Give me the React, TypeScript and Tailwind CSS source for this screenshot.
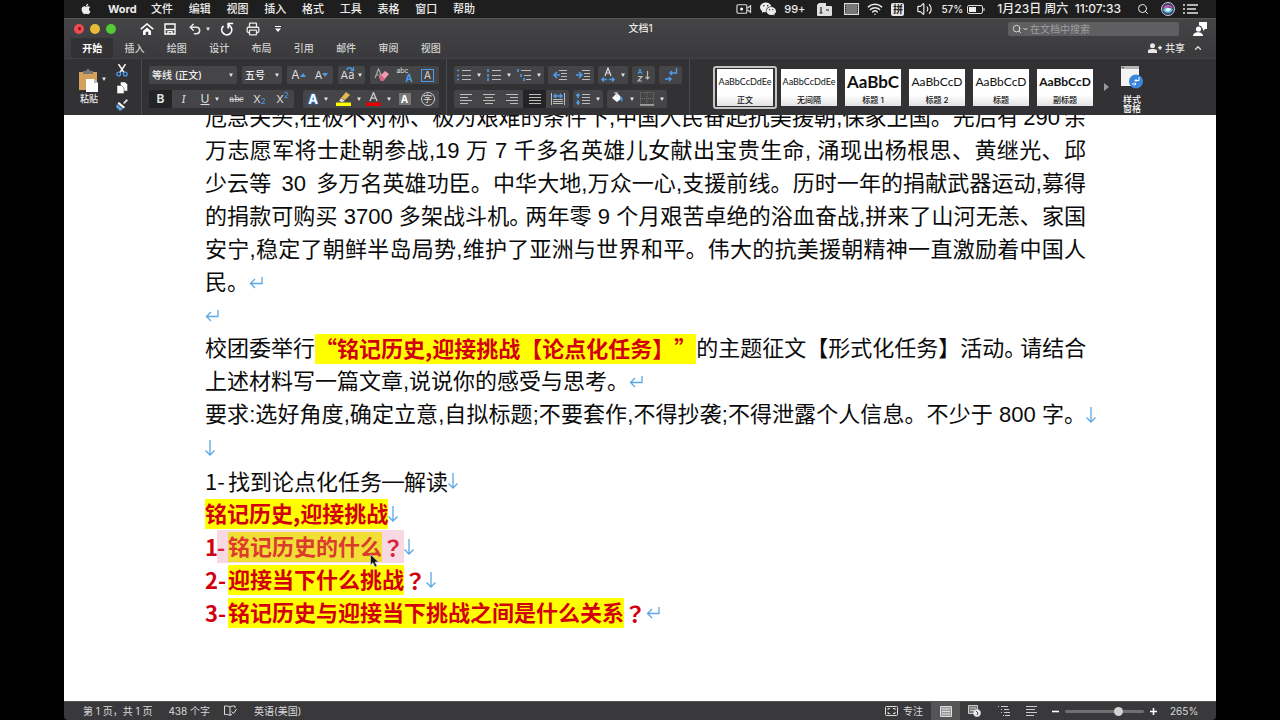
import type { ReactNode } from "react";
import { FaApple } from "react-icons/fa";
import { IoLogoWechat } from "react-icons/io5";
import { Search, Wifi, Volume2, Printer, Undo2, ChevronUp } from "lucide-react";

const menus = ["文件", "编辑", "视图", "插入", "格式", "工具", "表格", "窗口", "帮助"];
const tabs = ["开始", "插入", "绘图", "设计", "布局", "引用", "邮件", "审阅", "视图"];

function MenuBar() {
  return (
    <header className="flex h-[18px] shrink-0 items-center bg-[#1f1e1f] pl-4 pr-[18px] text-[11px] font-medium text-[#ececec]">
      <FaApple className="size-3" />
      <span className="ml-4 w-7 text-[11px] font-bold">Word</span>
      <nav className="ml-[15px] flex w-[324px] justify-between">
        {menus.map((m) => (
          <button key={m} type="button" className="leading-4">{m}</button>
        ))}
      </nav>
      <div className="ml-auto flex items-center gap-2 whitespace-nowrap">
        <svg viewBox="0 0 17 12" className="h-3 w-4" fill="none" stroke="#dcdcdc" strokeWidth="1.2">
          <rect x="1" y="1.5" width="10.5" height="9" rx="1" />
          <circle cx="6" cy="6" r="1.6" fill="#fff" stroke="none" />
          <path d="M12 5.2 15.5 2.5v7L12 6.8" />
        </svg>
        <IoLogoWechat className="size-4" />
        <span className="mr-1 text-[11px]">99+</span>
        <svg viewBox="0 0 15 13" className="mr-1 h-[13px] w-[15px]" fill="#e0e0e0">
          <path d="M2 0h7v3h5a1 1 0 0 1 1 1v8a1 1 0 0 1-1 1H1a1 1 0 0 1-1-1V2Z" />
          <path d="M4 4v6M2.500 10h3M9 7h3" stroke="#222" strokeWidth="1.2" />
        </svg>
        <svg viewBox="0 0 15 12" className="h-3 w-[15px]" fill="#777" stroke="#ddd">
          <rect x="0.5" y="0.5" width="14" height="11" />
          <path d="M1.500 2v8M13.500 2v8" stroke="#222" strokeDasharray="1 1" />
        </svg>
        <Wifi className="size-4" strokeWidth={2.2} />
        <span className="mr-1 flex h-[13px] w-[13px] items-center justify-center rounded-[2px] bg-[#e6e6e6] text-[10px] font-bold leading-3 text-[#222]">拼</span>
        <Volume2 className="h-4 w-[17px]" strokeWidth={1.8} />
        <span className="-mr-1 text-[10px]">57%</span>
        <svg viewBox="0 0 18 9" className="mr-1 h-[9px] w-[18px]" fill="none" stroke="#ddd">
          <rect x="0.5" y="0.5" width="15" height="8" rx="1.5" />
          <rect x="2" y="2" width="7" height="5" fill="#eee" stroke="none" />
          <path d="M17 3v3" />
        </svg>
        <span className="mr-2 text-[12px]">1月23日 周六&nbsp; 11:07:33</span>
        <Search className="mr-1 size-3" strokeWidth={2} />
        <svg viewBox="0 0 14 14" className="size-[14px]">
          <circle cx="7" cy="7" r="6.5" fill="#3c3d70" stroke="#c9c9d6" />
          <path d="M2 7c1-5 8-5 10-1-3-1-6-1-10 1Z" fill="#d7529d" />
          <path d="M2 8c3-4 7-2 10-1-1 5-8 5-10 1Z" fill="#4cc3de" />
          <path d="M4 8c2-3 4-2 6-1-1 3-4 3-6 1Z" fill="#f4f8ff" />
        </svg>
        <svg viewBox="0 0 15 10" className="h-[10px] w-[15px]" stroke="#e6e6e6" strokeWidth="1.5">
          <path d="M0 1h2M4 1h11M0 5h2M4 5h9M0 9h2M4 9h11" />
        </svg>
      </div>
    </header>
  );
}

function TitleBar() {
  return (
    <div className="grid h-5 shrink-0 grid-cols-[1fr_auto_1fr] items-center border-t border-[#5e5557] pl-[10px] pr-[9px] text-[#eaeaea]">
      <div className="flex items-center">
        <div className="flex gap-[6px]">
          <button type="button" aria-label="关闭" className="flex size-[10px] items-center justify-center rounded-full bg-[#ee4b50]"><span className="size-[3px] rounded-full bg-[#7c0d12]" /></button>
          <button type="button" aria-label="最小化" className="size-[10px] rounded-full bg-[#e5bd36]" />
          <button type="button" aria-label="缩放" className="size-[10px] rounded-full bg-[#54cb35]" />
        </div>
        <div className="ml-6 flex items-center">
          <button type="button" aria-label="主页">
            <svg viewBox="0 0 14 12" className="h-3 w-[14px]" fill="none" stroke="#fff" strokeWidth="1.6">
              <path d="M0.8 6.2 7 1l6.2 5.2" />
              <path d="M7 4.5 11 8v4H8.3V8.8H5.7V12H3V8Z" fill="#fff" stroke="none" />
            </svg>
          </button>
          <button type="button" aria-label="保存" className="ml-[10px]">
            <svg viewBox="0 0 12 12" className="size-3" fill="none" stroke="#fff" strokeWidth="1.4">
              <path d="M1 1h10v10H1Z" />
              <path d="M1 6.5h10" />
              <path d="M4 11V8.6h4V11" />
            </svg>
          </button>
          <button type="button" aria-label="撤销" className="ml-3 flex items-center gap-1"><Undo2 className="size-[14px]" strokeWidth={2.6} /><Caret /></button>
          <button type="button" aria-label="重做" className="ml-[10px]">
            <svg viewBox="0 0 14 14" className="size-[14px]" fill="none" stroke="#fff" strokeWidth="1.7">
              <path d="M3.500 4A5 5 0 1 0 11 5.200L8.300 2" />
              <path d="M13.200 1.500H8.200V6.500" />
            </svg>
          </button>
          <button type="button" aria-label="打印" className="ml-3"><Printer className="size-[14px]" strokeWidth={2.2} /></button>
          <button type="button" aria-label="自定义" className="ml-[15px]">
            <svg viewBox="0 0 6 6" className="size-[6px]" fill="#fff"><path d="M0 0h6v1H0ZM0 2.5h6L3 6Z" /></svg>
          </button>
        </div>
      </div>
      <h1 className="text-[10px] font-medium">文档1</h1>
      <div className="flex items-center justify-end">
        <label className="mr-[14px] flex h-[14px] w-[171px] items-center rounded-[2px] bg-[#5f5e60] pl-1">
          <Search className="size-[10px] shrink-0" />
          <svg viewBox="0 0 5 4" className="ml-px h-1 w-[5px] shrink-0" fill="none" stroke="#ddd"><path d="m.5 1 2 2 2-2" /></svg>
          <input aria-label="在文档中搜索" placeholder="在文档中搜索" className="ml-[2px] w-full min-w-0 bg-transparent text-[10px] leading-3 outline-none placeholder:text-[#a0a0a0]" />
        </label>
        <svg viewBox="0 0 14 14" className="size-[14px]" fill="#fff">
          <path d="M6 0h8v7h-2l-2 2V6.500H9A3 3 0 0 0 6 3.500Z" />
          <circle cx="5.500" cy="7" r="2.600" />
          <path d="M0 14c0-5 10-5 10 0Z" />
        </svg>
      </div>
    </div>
  );
}

function TabBar() {
  return (
    <div className="flex h-5 shrink-0 items-center justify-between pl-[7px] pr-[13px]">
      <nav className="flex h-full w-[381px]">
        {tabs.map((t, i) => (
          <button
            key={t}
            type="button"
            className={i === 0 ? "flex-1 bg-[#323133] text-[10px] font-bold text-white" : "flex-1 text-[10px] font-medium text-[#d2d2d2]"}
          >
            {t}
          </button>
        ))}
      </nav>
      <div className="flex items-center text-[10px] font-medium text-[#e0e0e0]">
        <button type="button" className="mr-2 flex items-center gap-[3px]">
          <svg viewBox="0 0 14 10" className="h-[10px] w-[14px]" fill="#e8e8e8">
            <circle cx="4.500" cy="2.800" r="2.500" />
            <path d="M0 10V7.500C0 5.500 9 5.500 9 7.500V10ZM10 4h4v1.500h-4ZM11.300 2.700h1.500v4h-1.500Z" />
          </svg>
          共享
        </button>
        <button type="button" aria-label="折叠功能区"><ChevronUp className="size-[10px]" strokeWidth={3} /></button>
      </div>
    </div>
  );
}

function Caret() {
  return <svg viewBox="0 0 4 4" className="size-1 shrink-0" fill="#e6e6e6"><path d="M0 .5h4L2 4Z" /></svg>;
}

function Group({ children }: { children: ReactNode }) {
  return <div className="flex h-[18px] rounded-[2px] bg-[#454446]">{children}</div>;
}

function Tool({ label, wide, active, children }: { label: string; wide?: boolean; active?: boolean; children: ReactNode }) {
  return (
    <button
      type="button"
      aria-label={label}
      className={
        (wide ? "w-[30px] gap-[6px] " : "w-[23px] ") +
        (active ? "bg-[#242325] " : "") +
        "flex h-full items-center justify-center text-[12px] leading-4 text-[#dedede]"
      }
    >
      {children}
      {wide && <Caret />}
    </button>
  );
}

function Lines({ d, blue }: { d: string; blue?: string }) {
  return (
    <svg viewBox="0 0 14 12" className="h-3 w-[14px] shrink-0" fill="none" stroke="#bdbdbd" strokeWidth="1">
      <path d={d} />
      {blue && <path d={blue} stroke="#4c9be8" strokeWidth="1.6" />}
    </svg>
  );
}

function Divider() {
  return <div className="mx-[7px] w-px self-stretch bg-[#4a494b]" />;
}

function FontTools() {
  return (
    <div className="flex w-[290px] flex-col gap-[6px]">
      <div className="flex justify-between">
        <label className="flex h-[18px] w-[88px] items-center rounded-[2px] bg-[#454446] pr-1">
          <select aria-label="字体" className="w-full appearance-none bg-transparent pl-[3px] text-[10px] font-medium text-[#f0f0f0]"><option>等线 (正文)</option></select>
          <Caret />
        </label>
        <label className="flex h-[18px] w-10 items-center rounded-[2px] bg-[#454446] pr-[3px]">
          <select aria-label="字号" className="w-full appearance-none bg-transparent pl-[3px] text-[10px] font-medium text-[#f0f0f0]"><option>五号</option></select>
          <Caret />
        </label>
        <Group>
          <Tool label="增大字号">A<svg viewBox="0 0 6 4" className="h-1 w-[6px]" fill="#4c9be8"><path d="M0 4h6L3 0Z" /></svg></Tool>
          <Tool label="减小字号"><span className="text-[11px]">A</span><svg viewBox="0 0 6 4" className="h-1 w-[6px]" fill="#4c9be8"><path d="M0 0h6L3 4Z" /></svg></Tool>
        </Group>
        <Group>
          <button type="button" aria-label="更改大小写" className="relative flex w-[27px] items-center justify-center gap-1 text-[11px] text-[#dedede]">
            Aa<Caret />
            <svg viewBox="0 0 8 5" className="absolute left-2 top-px h-[5px] w-2" fill="none" stroke="#4c9be8" strokeWidth="1.3"><path d="M.5 3c1-3 5-3 6 0M7.500 0v3.500H4.500" /></svg>
          </button>
        </Group>
        <Group>
          <Tool label="清除格式">
            <svg viewBox="0 0 16 14" className="h-[14px] w-4">
              <path d="M1 10 4.500 1 8 9M2.500 7h4" fill="none" stroke="#aaa" strokeWidth="1.2" />
              <path d="m5 9 6-6 4 3-6 7H7Z" fill="#ee9cb0" />
              <path d="m5 9 2-2 4 4-2 2H7Z" fill="#d9667f" />
            </svg>
          </Tool>
          <Tool label="拼音指南">
            <span className="flex flex-col items-end leading-none">
              <span className="mr-1 h-[6px] text-[7px] leading-[6px]">abc</span>
              <span className="h-[9px] text-[10px] font-bold leading-[9px] text-[#4c9be8]">A</span>
            </span>
          </Tool>
          <Tool label="字符边框"><span className="flex size-[13px] items-center justify-center border border-[#4c9be8] text-[10px]">A</span></Tool>
        </Group>
      </div>
      <div className="flex justify-between">
        <Group>
          <Tool label="粗体" active><b>B</b></Tool>
          <Tool label="斜体"><i className="font-serif">I</i></Tool>
          <Tool label="下划线" wide><u>U</u></Tool>
          <Tool label="删除线"><s className="font-serif text-[10px]">abc</s></Tool>
          <Tool label="下标"><span className="text-[11px]">X</span><sub className="text-[8px] leading-none text-[#4c9be8]">2</sub></Tool>
          <Tool label="上标"><span className="text-[11px]">X</span><sup className="text-[8px] leading-none text-[#4c9be8]">2</sup></Tool>
        </Group>
        <Group>
          <Tool label="文本效果" wide><b className="text-[13px] text-white [text-shadow:0_0_2px_#2f8cf0,0_0_3px_#2f8cf0]">A</b></Tool>
          <Tool label="突出显示" wide>
            <svg viewBox="0 0 15 14" className="h-[14px] w-[15px] shrink-0">
              <path d="M5 6 10 0l4 3-5 5Z" fill="#e3b84c" />
              <path d="m5 6 4 3-3 1-3-1Z" fill="#ddd" />
              <path d="M0 10.500h15V14H0Z" fill="#ffff00" />
            </svg>
          </Tool>
          <Tool label="字体颜色" wide>
            <svg viewBox="0 0 15 14" className="h-[14px] w-[15px] shrink-0">
              <path d="m4 9 3.500-8.500L11 9M5.200 6.200h4.600" fill="none" stroke="#ccc" strokeWidth="1.300" />
              <path d="M0 10.500h15V14H0Z" fill="#e60000" />
            </svg>
          </Tool>
          <Tool label="字符底纹"><span className="flex size-3 items-center justify-center bg-[#777] text-[10px] font-bold text-white">A</span></Tool>
          <Tool label="带圈字符"><span className="flex size-[14px] items-center justify-center rounded-full border border-[#ccc] text-[9px]">字</span></Tool>
        </Group>
      </div>
    </div>
  );
}

function ParagraphTools() {
  return (
    <div className="flex flex-col gap-[6px]">
      <div className="flex gap-1">
        <Group>
          <Tool label="项目符号" wide><Lines d="M5 1.500h9M5 6.500h9M5 10.500h9" blue="M0 1.500h2M0 6.500h2M0 10.500h2" /></Tool>
          <Tool label="编号" wide><Lines d="M5 1.500h9M5 6.500h9M5 10.500h9" blue="M1 0v3M1 5v3M1 9v3" /></Tool>
          <Tool label="多级列表" wide><Lines d="M4 1.500h10M7 6.500h7M9 10.500h5" blue="M1 0v3M4 5v3M7 9v3" /></Tool>
        </Group>
        <Group>
          <Tool label="减少缩进"><Lines d="M6 1.500h8M8 4.500h6M8 7.500h6M6 10.500h8" blue="M7 6H1M4 3 1 6l3 3" /></Tool>
          <Tool label="增加缩进"><Lines d="M6 1.500h8M8 4.500h6M8 7.500h6M6 10.500h8" blue="M0 6h6M3 3l3 3-3 3" /></Tool>
        </Group>
        <Group>
          <Tool label="中文版式" wide>
            <svg viewBox="0 0 14 16" className="h-4 w-[14px] shrink-0" fill="none">
              <path d="m4 9 3-8 3 8M5 6h4" stroke="#ddd" strokeWidth="1.200" />
              <path d="M1 12.500h5M3 10.500l-2 2 2 2M8 12.500h5M11 10.500l2 2-2 2" stroke="#4c9be8" strokeWidth="1.600" />
            </svg>
          </Tool>
        </Group>
        <Group>
          <Tool label="排序">
            <svg viewBox="0 0 14 14" className="size-[14px]" fill="none">
              <path d="m1 6 2-5 2 5M2 4.500h2" stroke="#4c9be8" />
              <path d="M1 8.500h4L1 13h4M10.500 3v8M8.500 9l2 2 2-2" stroke="#bbb" strokeWidth="1.200" />
            </svg>
          </Tool>
        </Group>
        <Group>
          <Tool label="显示编辑标记">
            <svg viewBox="0 0 14 14" className="size-[14px]" fill="none" stroke="#4c9be8" strokeWidth="1.500">
              <path d="M12.500 0v5H6M8 3 6 5l2 2M1 11h6M5 9l2 2-2 2" />
            </svg>
          </Tool>
        </Group>
      </div>
      <div className="flex gap-1">
        <Group>
          <Tool label="左对齐"><Lines d="M1 1.500h12M1 4.500h8M1 7.500h12M1 10.500h8" /></Tool>
          <Tool label="居中"><Lines d="M1 1.500h12M3 4.500h8M1 7.500h12M3 10.500h8" /></Tool>
          <Tool label="右对齐"><Lines d="M1 1.500h12M5 4.500h8M1 7.500h12M5 10.500h8" /></Tool>
          <Tool label="两端对齐" active><Lines d="M1 1.500h12M1 4.500h12M1 7.500h12M1 10.500h12" /></Tool>
          <Tool label="分散对齐"><Lines d="M.5 0v12M13.500 0v12M2 6.500h10M2 8.500h10M2 10.500h10" blue="M3 3h8M5 1 3 3l2 2M9 1l2 2-2 2" /></Tool>
        </Group>
        <Group>
          <Tool label="行距" wide><Lines d="M6 1.500h8M6 4.500h8M6 7.500h8M6 10.500h8" blue="M2 1v4M0.500 3 2 1l1.500 2M2 7v4M.5 9 2 11l1.500-2" /></Tool>
        </Group>
        <Group>
          <Tool label="底纹" wide>
            <svg viewBox="0 0 14 14" className="size-[14px] shrink-0">
              <path d="m2 6 5-5 5 5-5 4Z" fill="#fff" />
              <path d="M5 2V0h2v5" fill="none" stroke="#ccc" />
              <path d="M10 4c3 1 3 4 2 6l-2-3Z" fill="#4c9be8" />
            </svg>
          </Tool>
          <Tool label="边框" wide>
            <svg viewBox="0 0 14 14" className="size-[14px] shrink-0" fill="none" stroke="#777" strokeDasharray="1 1">
              <path d="M.5.5h13v12H.5ZM7 0v13M0 6.500h14" />
              <path d="M0 13h14" stroke="#ddd" strokeDasharray="none" />
            </svg>
          </Tool>
        </Group>
      </div>
    </div>
  );
}

const styles = [
  { name: "正文", sample: "AaBbCcDdEe", cls: "text-[9px]" },
  { name: "无间隔", sample: "AaBbCcDdEe", cls: "text-[9px]" },
  { name: "标题 1", sample: "AaBbC", cls: "text-[17px] font-bold" },
  { name: "标题 2", sample: "AaBbCcD", cls: "text-[12px]" },
  { name: "标题", sample: "AaBbCcD", cls: "text-[12px]" },
  { name: "副标题", sample: "AaBbCcD", cls: "text-[12px] font-bold" },
];

function StyleGallery() {
  return (
    <div className="flex items-center pl-4">
      {styles.map((s, i) => (
        <button
          key={s.name}
          type="button"
          className={(i === 0 ? "border-[#c4c4c4] " : "border-transparent ") + "flex h-[43px] w-16 items-center justify-center rounded-[3px] border-2"}
        >
          <span className="flex h-[37px] w-14 flex-col items-center overflow-hidden bg-gradient-to-b from-white from-70% to-[#e2e2e4] text-[#111]">
            <span className={s.cls + " h-[25px] whitespace-nowrap font-['Lato'] leading-[25px]"}>{s.sample}</span>
            <span className="text-[8px] font-medium leading-3">{s.name}</span>
          </span>
        </button>
      ))}
      <button type="button" aria-label="更多样式" className="ml-[7px] mr-[11px]">
        <svg viewBox="0 0 5 8" className="h-2 w-[5px]" fill="#999"><path d="M0 0v8l5-4Z" /></svg>
      </button>
      <button type="button" className="mt-1 flex w-6 flex-col items-center text-[9px] font-medium leading-[9px] text-white">
        <svg viewBox="0 0 22 23" className="mb-[6px] h-[23px] w-[22px]">
          <path d="M0 0h18v20H0Z" fill="#f4f4f4" />
          <path d="M0 0h18v3H0Z" fill="#b5b5b5" />
          <circle cx="2" cy="1.500" r=".8" fill="#444" />
          <circle cx="15" cy="15.500" r="7" fill="#3b86dc" />
          <path d="M18 11v3.500h-4M15.500 13 14 14.500l1.500 1.500M11 18h4M13.500 16.500 15 18l-1.500 1.500" fill="none" stroke="#fff" />
        </svg>
        <span className="w-5">样式窗格</span>
      </button>
    </div>
  );
}

function Ribbon() {
  return (
    <section aria-label="功能区" className="flex h-[57px] shrink-0 items-center border-t border-[#434244] bg-[#323133] pl-3">
      <button type="button" className="flex w-[26px] flex-col items-center text-[9px] font-medium leading-3 text-[#eee]">
        <svg viewBox="0 0 20 24" className="h-6 w-5">
          <path d="M0 3h18v18H0Z" fill="#d5a05c" />
          <path d="M4 5V2h3a2 2 0 0 1 4 0h3v3Z" fill="#777" />
          <path d="M7 10h8l4 4v9H7Z" fill="#fff" />
          <path d="M15 10v4h4Z" fill="#bbb" />
        </svg>
        粘贴
      </button>
      <span className="mb-4"><Caret /></span>
      <div className="ml-[10px] mr-[6px] flex flex-col items-center gap-[5px]">
        <button type="button" aria-label="剪切">
          <svg viewBox="0 0 12 13" className="h-[13px] w-3" fill="none" strokeWidth="1.500">
            <path d="M2.500 0 8 8.500M9.500 0 4 8.500" stroke="#f2f2f2" />
            <circle cx="2.700" cy="10" r="1.900" stroke="#4c9be8" strokeWidth="1.300" />
            <circle cx="9.300" cy="10" r="1.900" stroke="#4c9be8" strokeWidth="1.300" />
          </svg>
        </button>
        <button type="button" aria-label="复制">
          <svg viewBox="0 0 11 12" className="h-3 w-[11px]" stroke="#555" strokeWidth=".6" fill="#fff"><path d="M3.500 0H8l2.500 2.500V9h-7Z" /><path d="M0 3.500h4.500L7 6v5.500H0Z" /></svg>
        </button>
        <button type="button" aria-label="格式刷">
          <svg viewBox="0 0 12 12" className="size-3"><path d="m7 4 3.500-4L12 1.500 8.500 5Z" fill="#ddd" /><path d="m3 3 6 5-1.500 1.500-6-5Z" fill="#fff" /><path d="m1 5 6 5-3 2-4-4Z" fill="#5d9fe2" /></svg>
        </button>
      </div>
      <Divider />
      <FontTools />
      <Divider />
      <ParagraphTools />
      <Divider />
      <StyleGallery />
    </section>
  );
}

function Return() {
  return (
    <svg viewBox="0 0 14 12" className="h-3 w-[14px] shrink-0" fill="none" stroke="#5aa9e6" strokeWidth="1.300">
      <path d="M13 0v6.500H1.500M6 2 1.500 6.500 6 11" />
    </svg>
  );
}

function Break() {
  return (
    <svg viewBox="0 0 10 16" className="h-4 w-[10px] shrink-0" fill="none" stroke="#5aa9e6" strokeWidth="1.300">
      <path d="M5 0v15M.5 10.500 5 15l4.500-4.500" />
    </svg>
  );
}

function Line({ children }: { children?: ReactNode }) {
  return <p className="flex h-[33px] items-center whitespace-nowrap leading-[33px]">{children}</p>;
}

function Full({ children }: { children: ReactNode }) {
  return <span className="h-[33px] w-full shrink-0 whitespace-normal [text-align-last:justify]">{children}</span>;
}

function Stop() {
  return <span className="-mr-[6px]">。</span>;
}

function Mark({ children }: { children: ReactNode }) {
  return <mark className="h-[30px] bg-[#ffff00] leading-[27px] text-[#d2000f] [text-spacing-trim:space-all]">{children}</mark>;
}

function Question() {
  return <span className="font-['Noto_Sans_CJK_TC',sans-serif]" lang="zh-TW">？</span>;
}

function Document() {
  return (
    <main className="min-h-0 flex-1 overflow-hidden bg-white pl-[141px] pr-[130px] font-['Liberation_Sans','Noto_Sans_CJK_SC',sans-serif] text-[22px] text-[#0b0b0b]">
      <div className="-mt-[14px]">
        <Line><Full>危急关头,在极不对称、极为艰难的条件下,中国人民奋起抗美援朝,保家卫国。先后有<span className="mx-1">290</span>余</Full></Line>
        <Line><Full>万志愿军将士赴朝参战,19 万 7 千多名英雄儿女献出宝贵生命, 涌现出杨根思、黄继光、邱</Full></Line>
        <Line><Full>少云等 <span className="mx-1">30</span> 多万名英雄功臣。中华大地,万众一心,支援前线。历时一年的捐献武器运动,募得</Full></Line>
        <Line><Full>的捐款可购买 3700 多架战斗机<Stop />两年零 9 个月艰苦卓绝的浴血奋战,拼来了山河无恙、家国</Full></Line>
        <Line><Full>安宁,稳定了朝鲜半岛局势,维护了亚洲与世界和平。伟大的抗美援朝精神一直激励着中国人</Full></Line>
        <Line>民。<Return /></Line>
        <Line><Return /></Line>
        <Line>
          校团委举行
          <b className="flex font-['Noto_Sans_CJK_SC',sans-serif]"><Mark>“铭记历史,迎接挑战【论点化任务】”</Mark></b>
          <span className="flex-1 text-right">的主题征文【形式化任务】活动<Stop />请结合</span>
        </Line>
        <Line>上述材料写一篇文章,说说你的感受与思考。<Return /></Line>
        <Line><Full>要求:选好角度,确定立意,自拟标题;不要套作,不得抄袭;不得泄露个人信息。不少于 800 字。</Full><Break /></Line>
        <Line><Break /></Line>
        <div className="font-['Noto_Sans_CJK_SC',sans-serif]">
          <Line><span className="w-[23px]">1-</span>找到论点化任务<span className="font-['Liberation_Sans']">—</span>解读<Break /></Line>
          <div className="font-bold text-[#d2000f]">
            <Line><Mark>铭记历史,迎接挑战</Mark><Break /></Line>
            <div className="relative">
              <Line>
                <span className="w-3">1</span>
                <span className="flex h-[33px] items-center bg-[#f7d8e3] text-[#d9263a]">
                  <span className="w-[11px]">-</span>
                  <mark className="h-[30px] bg-[#f1df38] leading-[27px] text-[#dc3a2c]">铭记历史的什么</mark><Question />
                </span>
                <Break />
              </Line>
              <svg viewBox="0 0 10 14" className="absolute left-[165px] top-6 z-10 h-[14px] w-[10px]" fill="#111" stroke="#ddd" strokeWidth=".6">
                <path d="M.5.5v10.500L3 8.700 5 13l2-1-2-4h3.500Z" />
              </svg>
            </div>
            <Line><span className="w-[23px]">2-</span><Mark>迎接当下什么挑战</Mark><Question /><Break /></Line>
            <Line><span className="w-[23px]">3-</span><Mark>铭记历史与迎接当下挑战之间是什么关系</Mark><Question /><Return /></Line>
          </div>
        </div>
      </div>
    </main>
  );
}

function StatusBar() {
  return (
    <footer className="flex h-[19px] shrink-0 items-center justify-between rounded-b-[4px] border-t border-[#555] bg-[#39383a] pl-[19px] pr-[19px] text-[10px] text-[#dadada]">
      <div className="flex items-center">
        <span>第 1 页，共 1 页</span>
        <span className="ml-4">438 个字</span>
        <svg viewBox="0 0 13 12" className="ml-[14px] h-3 w-[13px]" fill="none" stroke="#ddd">
          <path d="M6 2v8.500M6 2C5 1 3 1 .5 1v8.500c2.500 0 4.500 0 5.500 1 .500-.500 1-.800 2-1M6 2c1-1 3-1 5-1v2M7.500 6.500l2 2L12.500 4" />
        </svg>
        <button type="button" className="ml-[17px]">英语(美国)</button>
      </div>
      <div className="flex h-full items-center">
        <button type="button" className="mr-2 flex items-center gap-[5px]">
          <svg viewBox="0 0 13 10" className="h-[10px] w-[13px]" fill="none" stroke="#ddd">
            <rect x=".5" y=".5" width="12" height="9" rx="1" />
            <path d="M3 4V2.500h2M8 2.500h2V4M10 6v1.500H8M5 7.500H3V6" />
          </svg>
          专注
        </button>
        <button type="button" aria-label="页面视图" className="flex h-full w-[29px] items-center justify-center bg-[#565456]">
          <svg viewBox="0 0 12 11" className="h-[11px] w-3" fill="#999" stroke="#ddd"><path d="M.5.5h11v10H.5ZM2 3h8M2 5.500h8M2 8h8" /></svg>
        </button>
        <button type="button" aria-label="Web 版式" className="flex w-[29px] justify-center">
          <svg viewBox="0 0 13 12" className="h-3 w-[13px]" fill="none" stroke="#ccc"><path d="M.5.5h9v8h-9ZM2 3h6M2 5.500h6" fill="#777" /><circle cx="9" cy="8" r="3.500" fill="#eee" /><path d="m8 6 2 2-1 2" stroke="#444" /></svg>
        </button>
        <button type="button" aria-label="大纲" className="flex w-[29px] justify-center">
          <svg viewBox="0 0 12 10" className="h-[10px] w-3" stroke="#ccc"><path d="M0 .5h1M3 .5h7M3 3.500h1M6 3.500h5M3 6.500h1M6 6.500h6M5 9.500h1M7 9.500h5" /></svg>
        </button>
        <button type="button" aria-label="草稿" className="flex w-[27px] justify-center">
          <svg viewBox="0 0 12 10" className="h-[10px] w-3" stroke="#ccc"><path d="M0 .5h11M0 3.500h9M0 6.500h11M0 9.500h8" /></svg>
        </button>
        <button type="button" aria-label="缩小" className="ml-[7px] flex w-[7px]"><svg viewBox="0 0 7 7" className="size-[7px]" stroke="#fff" strokeWidth="1.600"><path d="M0 3.500h7" /></svg></button>
        <input
          type="range"
          aria-label="缩放比例"
          defaultValue={70}
          className="mx-[6px] h-[3px] w-[79px] appearance-none rounded-full bg-[#706f71] [&::-webkit-slider-thumb]:size-[9px] [&::-webkit-slider-thumb]:appearance-none [&::-webkit-slider-thumb]:rounded-full [&::-webkit-slider-thumb]:bg-[#d2d2d2]"
        />
        <button type="button" aria-label="放大" className="flex w-[7px]"><svg viewBox="0 0 7 7" className="size-[7px]" stroke="#fff" strokeWidth="1.600"><path d="M0 3.500h7M3.500 0v7" /></svg></button>
        <span className="ml-[13px] w-[27px]">265%</span>
      </div>
    </footer>
  );
}

export default function App() {
  return (
    <div className="h-screen overflow-hidden bg-black font-['Inter','Noto_Sans_CJK_SC',sans-serif]" lang="zh-CN">
      <div className="mx-auto flex h-full w-[90%] flex-col">
        <MenuBar />
        <div className="flex shrink-0 flex-col bg-gradient-to-b from-[#454446] to-[#3a393b]">
          <TitleBar />
          <TabBar />
        </div>
        <Ribbon />
        <Document />
        <StatusBar />
      </div>
    </div>
  );
}
